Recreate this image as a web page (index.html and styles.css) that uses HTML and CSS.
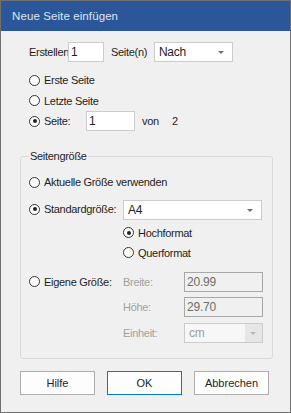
FILE: index.html
```html
<!DOCTYPE html>
<html lang="de">
<head>
    <meta charset="UTF-8">
    <title>Neue Seite einfügen</title>
    <link rel="stylesheet" href="styles.css">
</head>
<body>
    <div class="dialog">
        <div class="titlebar">Neue Seite einfügen</div>
        <div class="content">
            <div class="row create">
                <span class="lbl-create">Erstellen</span>
                <input class="field w-count" type="text" value="1">
                <span class="lbl-pages">Seite(n)</span>
                <div class="select w-where">Nach<i class="arrow"></i></div>
            </div>

            <div class="options">
                <div class="radio-row"><span class="radio"></span>Erste Seite</div>
                <div class="radio-row"><span class="radio"></span>Letzte Seite</div>
                <div class="radio-row">
                    <span class="radio checked"></span>
                    <span class="lbl-page">Seite:</span>
                    <input class="field w-page" type="text" value="1">
                    <span class="lbl-of">von</span>
                    <span>2</span>
                </div>
            </div>

            <fieldset class="group">
                <legend>Seitengröße</legend>
                <div class="radio-row r-current"><span class="radio"></span>Aktuelle Größe verwenden</div>
                <div class="size-row r-standard">
                    <div class="radio-row col-a"><span class="radio checked"></span>Standardgröße:</div>
                    <div class="select w-size">A4<i class="arrow"></i></div>
                </div>
                <div class="size-row r-portrait">
                    <div class="col-a"></div>
                    <div class="radio-row"><span class="radio checked"></span>Hochformat</div>
                </div>
                <div class="size-row r-landscape">
                    <div class="col-a"></div>
                    <div class="radio-row"><span class="radio"></span>Querformat</div>
                </div>
                <div class="size-row r-custom">
                    <div class="radio-row col-a"><span class="radio"></span>Eigene Größe:</div>
                    <span class="lbl-dim">Breite:</span>
                    <input class="field disabled w-dim" type="text" value="20.99" disabled>
                </div>
                <div class="size-row r-height">
                    <div class="col-a"></div>
                    <span class="lbl-dim">Höhe:</span>
                    <input class="field disabled w-dim" type="text" value="29.70" disabled>
                </div>
                <div class="size-row r-unit">
                    <div class="col-a"></div>
                    <span class="lbl-dim">Einheit:</span>
                    <div class="select disabled w-dim">cm<i class="arrow-box"><i class="arrow"></i></i></div>
                </div>
            </fieldset>

            <div class="buttons">
                <button type="button">Hilfe</button>
                <button type="button" class="default">OK</button>
                <button type="button">Abbrechen</button>
            </div>
        </div>
    </div>
</body>
</html>
```

FILE: styles.css
```css
body {
    margin: 0;
    font-family: "Liberation Sans", Arial, sans-serif;
    font-size: 11px;
    letter-spacing: -0.3px;
    color: #1e1e1e;
}
.dialog {
    width: 291px;
    height: 413px;
    box-sizing: border-box;
    border: 1px solid #707070;
    background: #f0f0f0;
}
.titlebar {
    height: 30px;
    line-height: 30px;
    padding-left: 11px;
    background: #2b579a;
    color: #dce4f0;
    font-size: 11.5px;
    letter-spacing: 0.1px;
}
.content {
    padding: 0 19px;
}
.row {
    display: flex;
    align-items: center;
    height: 20px;
    white-space: nowrap;
}
.create {
    margin-top: 11px;
    padding-left: 9px;
}
.lbl-create {
    width: 39px;
}
.lbl-pages {
    width: 43px;
    margin-left: 7px;
}
.field {
    box-sizing: border-box;
    height: 20px;
    margin: 0;
    padding: 0 2px;
    border: 1px solid #cccccc;
    background: #fff;
    font: inherit;
    font-size: 12px;
    letter-spacing: -0.2px;
    color: #1e1e1e;
    outline: none;
}
.field.disabled {
    background: #f0f0f0;
    border-color: #a8a8a8;
    color: #6d6d6d;
}
.w-count { width: 36px; }
.w-page { width: 49px; }
.w-where { width: 79px; }
.w-size { width: 139px; height: 23px; }
.w-dim { width: 79px; }
.select {
    position: relative;
    box-sizing: border-box;
    height: 20px;
    display: flex;
    align-items: center;
    padding-left: 4px;
    border: 1px solid #cccccc;
    background: #fff;
    font-size: 12px;
}
.select.disabled {
    background: #f7f7f7;
    color: #a0a0a0;
}
.arrow {
    position: absolute;
    right: 8px;
    top: 50%;
    margin-top: -1px;
    border-left: 3px solid transparent;
    border-right: 3px solid transparent;
    border-top: 3px solid #707070;
}
.arrow-box {
    position: absolute;
    right: 0;
    top: 0;
    bottom: 0;
    width: 17px;
    background: #e6e6e6;
}
.arrow-box .arrow {
    right: 6px;
    border-top-color: #b8b8b8;
}
.options {
    margin-top: 8px;
    padding-left: 9px;
}
.radio-row {
    display: flex;
    align-items: center;
    height: 20px;
    margin-bottom: 0.5px;
    white-space: nowrap;
}
.radio {
    box-sizing: border-box;
    flex-shrink: 0;
    width: 11px;
    height: 11px;
    margin-right: 4px;
    border: 1px solid #333;
    border-radius: 50%;
    background: #fff;
    display: flex;
    align-items: center;
    justify-content: center;
}
.radio.checked::after {
    content: "";
    width: 4px;
    height: 4px;
    border-radius: 50%;
    background: #222;
}
.lbl-page {
    width: 42px;
}
.lbl-of {
    width: 30px;
    margin-left: 7px;
}
.group {
    width: 253px;
    box-sizing: border-box;
    margin: 18px 0 0;
    padding: 9px 0 15px 8px;
    border: 1px solid #d9d9d9;
    border-radius: 3px;
}
.group legend {
    padding: 0 1px;
    line-height: 14px;
}
.size-row {
    display: flex;
    align-items: center;
}
.col-a {
    width: 94px;
    flex-shrink: 0;
}
.r-standard { margin-top: 6px; height: 23px; }
.r-portrait { margin-top: 2px; height: 20px; }
.r-landscape { height: 20px; }
.r-custom { margin-top: 9px; height: 20px; }
.r-height { margin-top: 5px; height: 20px; }
.r-unit { margin-top: 6px; height: 20px; }
.lbl-dim {
    width: 61px;
    color: #a0a0a0;
}
.buttons {
    display: flex;
    gap: 12px;
    margin-top: 12px;
}
button {
    width: 75px;
    height: 24px;
    padding: 0;
    border: 1px solid #adadad;
    background: #fdfdfd;
    font: inherit;
    color: #1e1e1e;
}
button.default {
    border-color: #0078d7;
}
```
